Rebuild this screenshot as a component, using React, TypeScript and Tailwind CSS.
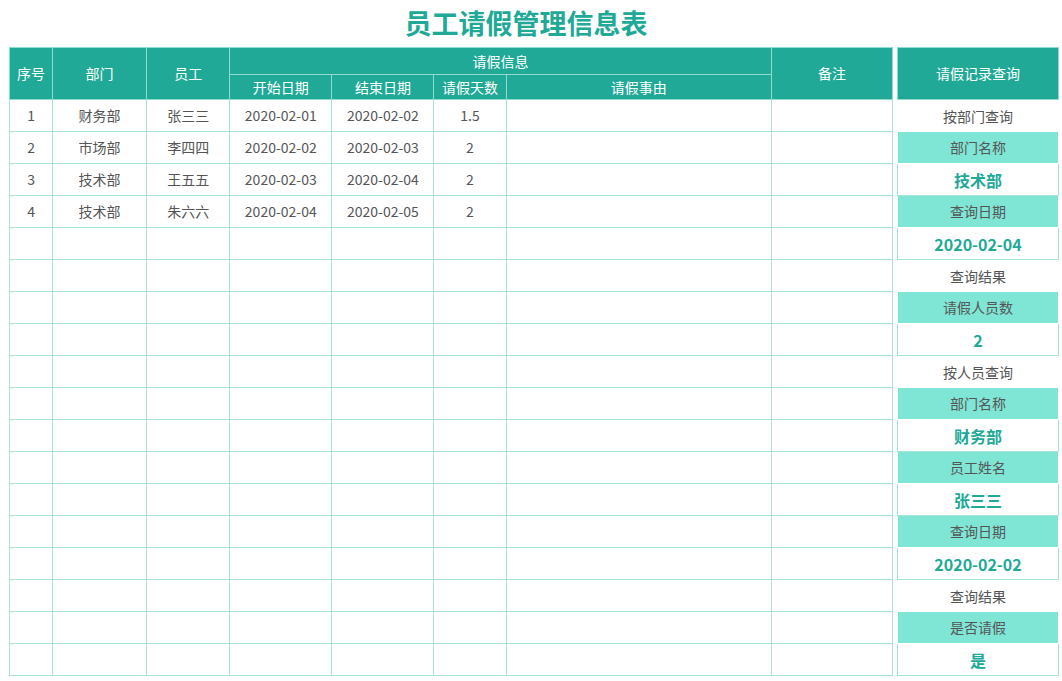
const ROWS = [
  ['1', '财务部', '张三三', '2020-02-01', '2020-02-02', '1.5'],
  ['2', '市场部', '李四四', '2020-02-02', '2020-02-03', '2'],
  ['3', '技术部', '王五五', '2020-02-03', '2020-02-04', '2'],
  ['4', '技术部', '朱六六', '2020-02-04', '2020-02-05', '2'],
]

const WIDTHS = [43, 94, 83, 102, 102, 72, 265, 121]

type PanelCell = { text: string; kind: 'plain' | 'label' | 'value' }

const PANEL: PanelCell[] = [
  { text: '按部门查询', kind: 'plain' },
  { text: '部门名称', kind: 'label' },
  { text: '技术部', kind: 'value' },
  { text: '查询日期', kind: 'label' },
  { text: '2020-02-04', kind: 'value' },
  { text: '查询结果', kind: 'plain' },
  { text: '请假人员数', kind: 'label' },
  { text: '2', kind: 'value' },
  { text: '按人员查询', kind: 'plain' },
  { text: '部门名称', kind: 'label' },
  { text: '财务部', kind: 'value' },
  { text: '员工姓名', kind: 'label' },
  { text: '张三三', kind: 'value' },
  { text: '查询日期', kind: 'label' },
  { text: '2020-02-02', kind: 'value' },
  { text: '查询结果', kind: 'plain' },
  { text: '是否请假', kind: 'label' },
  { text: '是', kind: 'value' },
]

const th = 'border-[1.5px] border-[#8fdccf] bg-[#20a997] text-white font-normal text-[14px] p-0'
const td = 'border-[1.5px] border-[#a6e3d9] text-[#555] text-[14px] text-center p-0 h-[32px]'

export default function App() {
  const empty = Array.from({ length: 14 })
  return (
    <div className="w-[1062px] h-[681px] overflow-hidden bg-white" style={{ fontFamily: '"Noto Sans CJK SC", "Noto Sans", sans-serif' }}>
      <h1 className="h-[47px] flex items-center justify-center text-[27px] font-bold text-[#20a997] pr-[10px]">
        员工请假管理信息表
      </h1>
      <div className="flex gap-[4px] pl-[9px]">
        <table className="border-collapse table-fixed" style={{ width: 884 }}>
          <colgroup>
            {WIDTHS.map((w, i) => <col key={i} style={{ width: w }} />)}
          </colgroup>
          <thead>
            <tr className="h-[27px]">
              <th rowSpan={2} className={th}>序号</th>
              <th rowSpan={2} className={th}>部门</th>
              <th rowSpan={2} className={th}>员工</th>
              <th colSpan={4} className={th}>请假信息</th>
              <th rowSpan={2} className={th}>备注</th>
            </tr>
            <tr className="h-[25px]">
              <th className={th}>开始日期</th>
              <th className={th}>结束日期</th>
              <th className={th}>请假天数</th>
              <th className={th}>请假事由</th>
            </tr>
          </thead>
          <tbody>
            {ROWS.map((r) => (
              <tr key={r[0]}>
                {r.map((c, i) => <td key={i} className={td}>{c}</td>)}
                <td className={td} />
                <td className={td} />
              </tr>
            ))}
            {empty.map((_, i) => (
              <tr key={i}>
                {WIDTHS.map((_, j) => <td key={j} className={td} />)}
              </tr>
            ))}
          </tbody>
        </table>
        <div className="w-[162px] flex flex-col">
          <div className="h-[53px] bg-[#20a997] border-[1.5px] border-[#8fdccf] text-white text-[14px] flex items-center justify-center">
            请假记录查询
          </div>
          {PANEL.map((p, i) => (
            <div
              key={i}
              className={
                p.kind === 'label'
                  ? 'h-[32px] flex items-center justify-center bg-[#7fe6d5] text-[#555] text-[14px] border-x-[1.5px] border-b border-white'
                  : p.kind === 'value'
                  ? 'h-[32px] flex items-center justify-center bg-white text-[#20a997] font-bold text-[16px] border-[1.5px] border-t-0 border-[#a6e3d9]'
                  : 'h-[32px] flex items-center justify-center bg-white text-[#555] text-[14px]'
              }
            >
              {p.text}
            </div>
          ))}
        </div>
      </div>
    </div>
  )
}
